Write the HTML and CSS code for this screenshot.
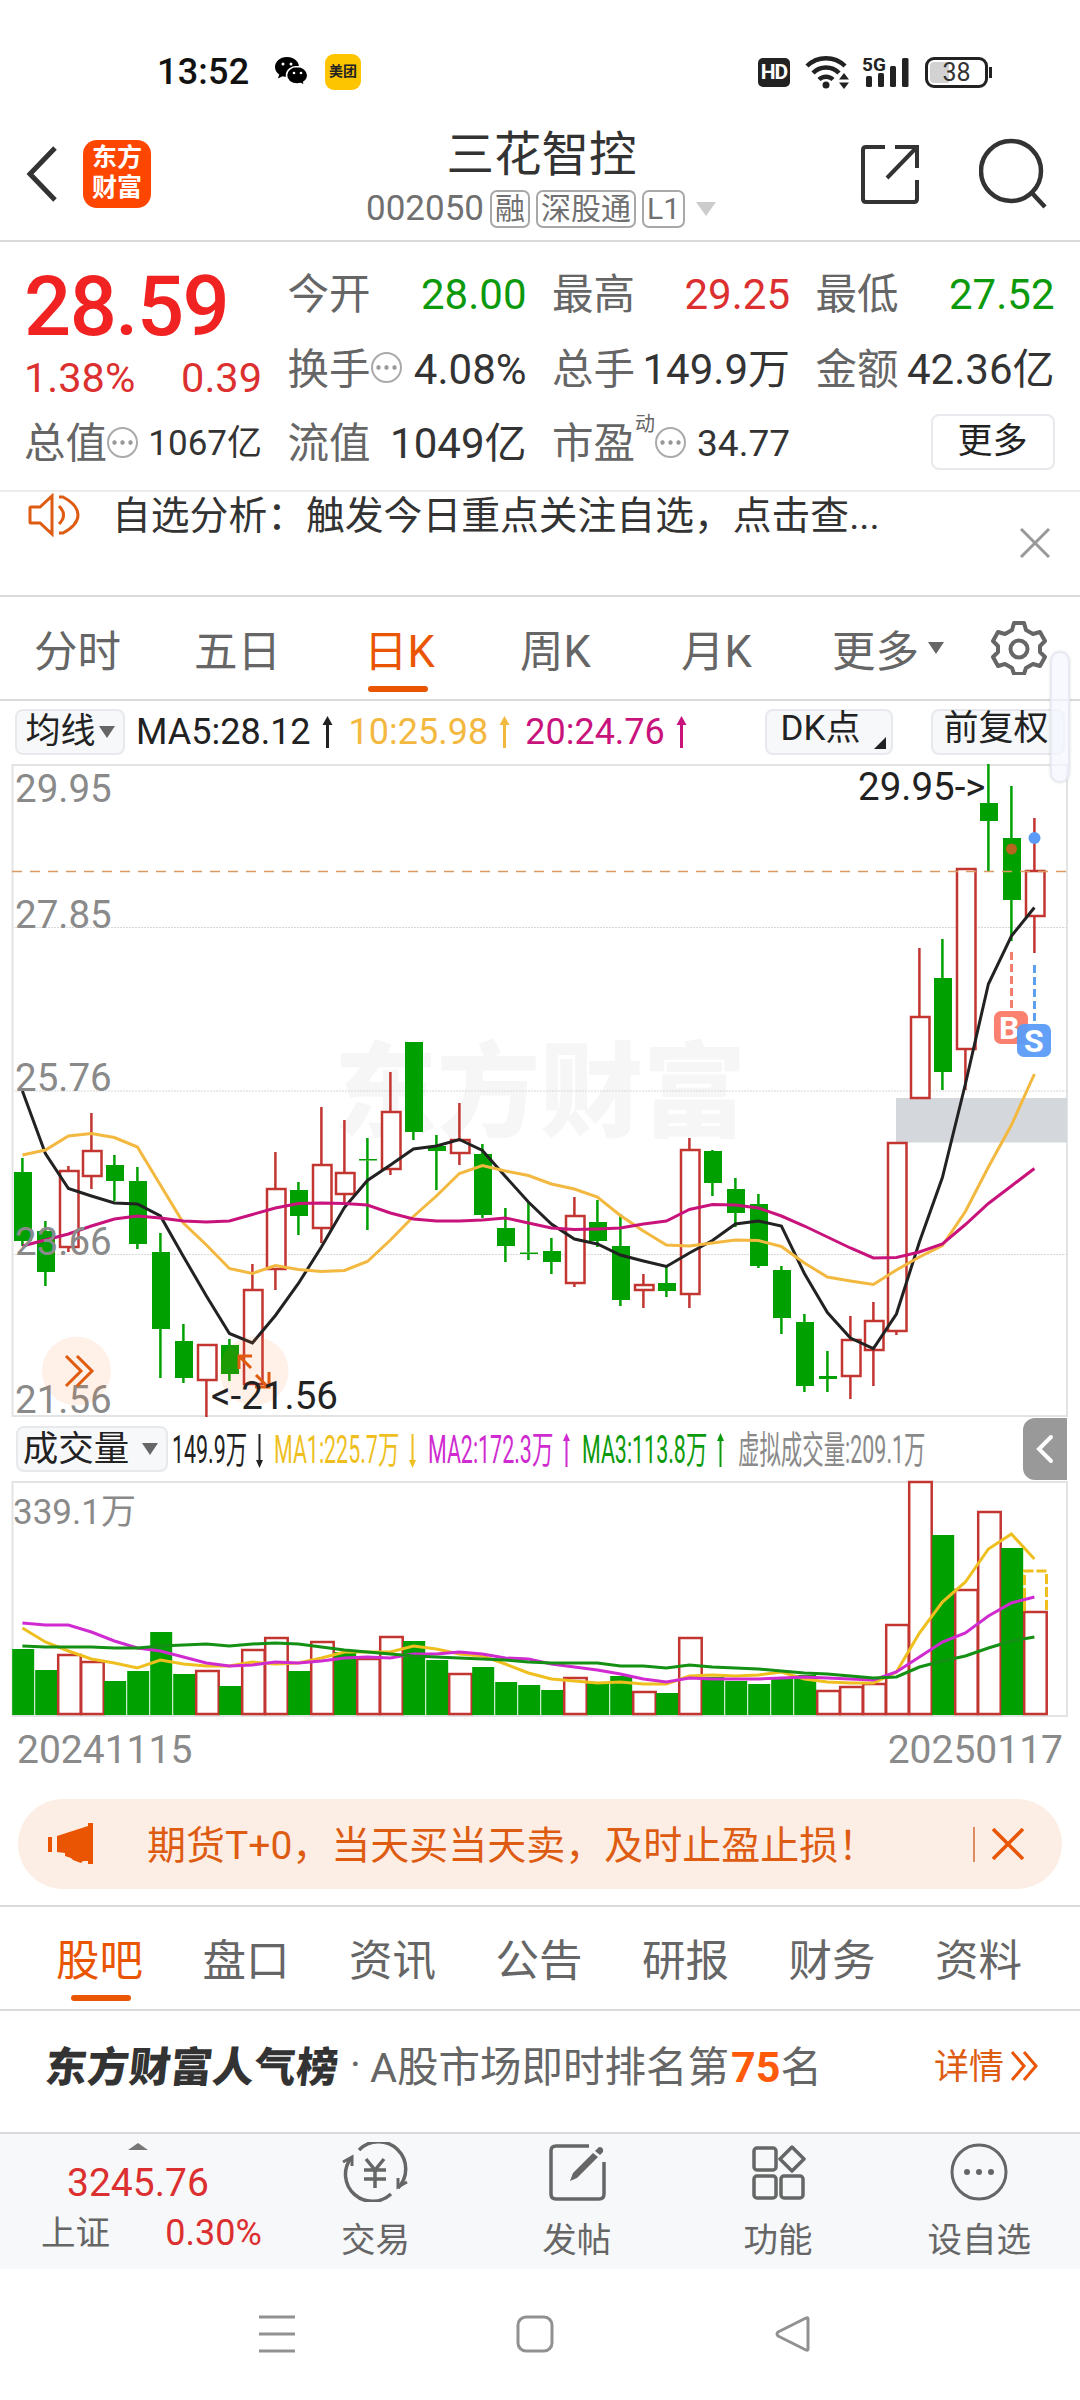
FILE: index.html
```
<!DOCTYPE html>
<html lang="zh-CN">
<head>
    <meta charset="UTF-8">
    <title>三花智控 002050</title>
    <meta name="viewport" content="width=device-width, initial-scale=1.0">
    <link rel="stylesheet" href="styles.css">
</head>
<body>
    <!-- Status bar -->
    <div class="status">
        <span class="clock">13:52</span>
        <svg class="wechat" width="34" height="30" viewBox="0 0 34 30">
            <path d="M12 0C5 0 0 4.600 0 10c0 3.200 1.600 5.800 4.200 7.600L3 21.500l4.500-2.300c1.400.4 3 .6 4.500.6C19 19.800 24 15.500 24 10S19 0 12 0z"/>
            <path d="M22 9.500c-6 0-10.500 4-10.500 8.800S16 27 22 27c1.300 0 2.500-.2 3.700-.5l4 2.200-1-3.500c2.400-1.600 4-4 4-6.900 0-4.800-4.600-8.800-10.700-8.800z" stroke="#fff" stroke-width="1.500"/>
            <g fill="#fff"><circle cx="8" cy="7" r="1.500"/><circle cx="16" cy="7" r="1.500"/><circle cx="19" cy="16" r="1.300"/><circle cx="26" cy="16" r="1.300"/></g>
        </svg>
        <span class="meituan">美团</span>
        <span class="hd">HD</span>
        <svg class="wifi" width="46" height="34" viewBox="0 0 46 34" fill="none" stroke="#222" stroke-width="4.500">
            <path d="M2 11a27 27 0 0 1 38 0"/>
            <path d="M8 18a18 18 0 0 1 26 0"/>
            <path d="M14 24.500a10 10 0 0 1 14 0"/>
            <circle cx="21" cy="30" r="3.500" fill="#222" stroke="none"/>
            <path d="M39 18l5 6.500h-10zM39 34l5-6.500h-10z" fill="#222" stroke="none"/>
        </svg>
        <svg class="signal" width="50" height="34" viewBox="0 0 50 34" fill="#222">
            <text x="0" y="15.500" class="net">5G</text>
            <rect x="4" y="21" width="6" height="11" rx="1.500"/>
            <rect x="16" y="18" width="6" height="14" rx="1.500"/>
            <rect x="28" y="11" width="6" height="21" rx="1.500"/>
            <rect x="40" y="3" width="6.500" height="29" rx="1.500"/>
        </svg>
        <span class="battery">38</span>
    </div>

    <!-- Title bar -->
    <div class="header">
        <svg class="back" width="32" height="56" viewBox="0 0 32 56"><path d="M29 2L4 28l25 26" fill="none" stroke="#333" stroke-width="5"/></svg>
        <div class="logo">东方<br>财富</div>
        <div class="title">
            <div class="name">三花智控</div>
            <div class="code"><span class="num">002050</span><span class="tag">融</span><span class="tag">深股通</span><span class="tag">L1</span><i class="down"></i></div>
        </div>
        <svg class="share" width="60" height="62" viewBox="0 0 60 62" fill="none" stroke="#333" stroke-width="4">
            <path d="M25 4H6q-3 0-3 3v49q0 3 3 3h48q3 0 3-3V37"/>
            <path d="M35 4h22v21M56 5L27 35"/>
        </svg>
        <svg class="search" width="70" height="72" viewBox="0 0 70 72" fill="none" stroke="#333" stroke-width="4.500">
            <circle cx="32" cy="33" r="30"/><path d="M53 55l13 14"/>
        </svg>
    </div>

    <!-- Quote -->
    <div class="quote">
        <div class="main">
            <div class="price">28.59</div>
            <div class="change"><span>1.38%</span><span>0.39</span></div>
        </div>
        <div class="cell"><span>今开</span><b class="green">28.00</b></div>
        <div class="cell"><span>最高</span><b class="red">29.25</b></div>
        <div class="cell"><span>最低</span><b class="green">27.52</b></div>
        <div class="cell"><span>换手</span><i class="tip"></i><b>4.08%</b></div>
        <div class="cell"><span>总手</span><b>149.9万</b></div>
        <div class="cell"><span>金额</span><b>42.36亿</b></div>
        <div class="cell"><span>总值</span><i class="tip"></i><b class="small">1067亿</b></div>
        <div class="cell"><span>流值</span><b>1049亿</b></div>
        <div class="cell"><span>市盈</span><sup>动</sup><i class="tip"></i><b class="mid">34.77</b></div>
        <div class="cell"><button class="more">更多</button></div>
    </div>

    <!-- Notice -->
    <div class="notice">
        <svg width="54" height="44" viewBox="0 0 54 44" fill="none" stroke="#dd5c12" stroke-width="3">
            <path d="M3 14h9L24 3v38L12 30H3q-1 0-1-1V15q0-1 1-1z"/>
            <path d="M31 13q9 9 0 18M31 4h4q15 8 15 18T35 40h-4"/>
        </svg>
        <span class="text">自选分析：触发今日重点关注自选，点击查...</span>
        <svg class="close" width="30" height="30" viewBox="0 0 30 30"><path d="M1 1l28 28M29 1L1 29" stroke="#999" stroke-width="3"/></svg>
    </div>

    <!-- Period tabs -->
    <div class="periods">
        <span>分时</span>
        <span>五日</span>
        <span class="active">日K</span>
        <span>周K</span>
        <span>月K</span>
        <span>更多<i class="down dark"></i></span>
        <svg width="56" height="54" viewBox="0 0 56 54" fill="none" stroke="#666" stroke-width="4" stroke-linejoin="round">
            <path d="M23 2h10l2 7 7 4 7-2 5 9-5 5v6l5 5-5 9-7-2-7 4-2 6H23l-2-6-7-4-7 2-5-9 5-5v-6l-5-5 5-9 7 2 7-4z"/>
            <circle cx="28" cy="28" r="8.500"/>
        </svg>
        <div class="handle"></div>
    </div>

    <!-- Moving averages -->
    <div class="averages">
        <button class="pick">均线<i class="down dark"></i></button>
        <span class="ma5">MA5:28.12<svg class="arrow" width="12" height="32" viewBox="0 0 12 32"><path d="M5 6h3v26H5zM6.500 0l5 9h-10z"/></svg></span>
        <span class="ma10">10:25.98<svg class="arrow" width="12" height="32" viewBox="0 0 12 32"><path d="M5 6h3v26H5zM6.500 0l5 9h-10z"/></svg></span>
        <span class="ma20">20:24.76<svg class="arrow" width="12" height="32" viewBox="0 0 12 32"><path d="M5 6h3v26H5zM6.500 0l5 9h-10z"/></svg></span>
        <button class="dk">DK点<i class="corner"></i></button>
        <button class="fq">前复权</button>
    </div>

    <!-- Candles -->
    <svg id="kline" class="chart" width="1080" height="653" viewBox="0 0 1080 653"></svg>

    <!-- Volume legend -->
    <div class="legend">
        <button class="pick wide">成交量<i class="down dark"></i></button>
        <svg id="legend" width="770" height="64" viewBox="170 0 770 64"></svg>
        <div class="side"><svg width="20" height="30" viewBox="0 0 20 30"><path d="M16 3L4 15l12 12" fill="none" stroke="#fff" stroke-width="4" stroke-linecap="round"/></svg></div>
    </div>

    <svg id="volume" class="chart" width="1080" height="236" viewBox="0 0 1080 236"></svg>
    <div class="dates"><span>20241115</span><span>20250117</span></div>

    <!-- Banner -->
    <div class="banner">
        <svg width="46" height="42" viewBox="0 0 46 42" fill="#ea5504"><path d="M0 14h4v15H0zM9 13L40 3V0h5v41h-5v-3h-5l-2 2-8-3-2-2-6-2v-3L9 29z"/></svg>
        <span class="text">期货T+0，当天买当天卖，及时止盈止损！</span>
        <i class="bar"></i>
        <svg width="32" height="32" viewBox="0 0 32 32"><path d="M1 1l30 30M31 1L1 31" stroke="#ea5504" stroke-width="3.500"/></svg>
    </div>

    <!-- Section tabs -->
    <div class="sections">
        <span class="active">股吧</span>
        <span>盘口</span>
        <span>资讯</span>
        <span>公告</span>
        <span>研报</span>
        <span>财务</span>
        <span>资料</span>
    </div>

    <!-- Popularity rank -->
    <div class="rank">
        <span class="brand">东方财富人气榜</span>
        <span class="dot">·</span>
        <span class="desc">A股市场即时排名第<b>75</b>名</span>
        <span class="detail">详情</span>
        <svg width="30" height="30" viewBox="0 0 30 30" fill="none" stroke="#ea5504" stroke-width="3"><path d="M2 1l12 14L2 29M14 1l12 14-12 14"/></svg>
    </div>

    <!-- Bottom bar -->
    <div class="toolbar">
        <div class="index">
            <i class="up"></i>
            <div class="point">3245.76</div>
            <div class="row"><span>上证</span><span class="red">0.30%</span></div>
        </div>
        <div class="item">
            <svg width="68" height="60" viewBox="0 0 68 60" fill="none" stroke="#666" stroke-width="3.500">
                <path d="M18 8A27 27 0 0 1 57 46M50 52A27 27 0 0 1 10 16"/>
                <path d="M2 20l9-5v9M66 40l-9 5v-9" stroke-width="3"/>
                <path d="M25 17l9 11 9-11M34 28v18M23 28h22M23 37h22"/>
            </svg>
            交易
        </div>
        <div class="item">
            <svg width="60" height="60" viewBox="0 0 60 60" fill="none" stroke="#666" stroke-width="3.500">
                <path d="M42 4H9Q4 4 4 9v43q0 5 5 5h43q5 0 5-5V20"/>
                <path d="M23 39l3-8L46 11l5 4-21 21zM48 9l4-4q5 0 4 5l-3 3z" fill="#666" stroke="none"/>
            </svg>
            发帖
        </div>
        <div class="item">
            <svg width="56" height="60" viewBox="0 0 56 60" fill="none" stroke="#666" stroke-width="3.500" stroke-linejoin="round">
                <rect x="4" y="6" width="22" height="22" rx="3"/>
                <rect x="4" y="34" width="22" height="22" rx="3"/>
                <rect x="31" y="34" width="22" height="22" rx="3"/>
                <path d="M42 5l12 12-12 12-12-12z"/>
            </svg>
            功能
        </div>
        <div class="item">
            <svg width="60" height="60" viewBox="0 0 60 60" fill="#666">
                <circle cx="30" cy="30" r="27" fill="none" stroke="#666" stroke-width="3"/>
                <circle cx="18" cy="30" r="3"/><circle cx="30" cy="30" r="3"/><circle cx="42" cy="30" r="3"/>
            </svg>
            设自选
        </div>
    </div>

    <!-- System navigation -->
    <div class="nav">
        <svg width="36" height="38" viewBox="0 0 36 38" stroke="#919191" stroke-width="3"><path d="M0 2h36M0 19h36M0 36h36"/></svg>
        <svg width="38" height="38" viewBox="0 0 38 38" fill="none" stroke="#919191" stroke-width="3"><rect x="2" y="2" width="34" height="34" rx="8"/></svg>
        <svg width="38" height="38" viewBox="0 0 38 38" fill="none" stroke="#919191" stroke-width="3" stroke-linejoin="round"><path d="M34 4v30q0 2-2 1L4 21q-2-2 0-4L32 3q2-1 2 1z"/></svg>
    </div>

    <script src="chart.js"></script>
</body>
</html>
```
FILE: styles.css
```
* {
    box-sizing: border-box;
}

body {
    margin: 0;
    width: 1080px;
    height: 2400px;
    overflow: hidden;
    background: #fff;
    color: #333;
    font-family: Roboto, "Noto Sans CJK SC", sans-serif;
}

svg {
    display: block;
    flex: none;
}

button {
    font-family: inherit;
    color: #222;
    padding: 0;
    border: 2px solid #e8e9ec;
    border-radius: 8px;
    background: #f7f8fa;
    white-space: nowrap;
}

.red {
    color: #dc2f2f !important;
}

.green {
    color: #0c9a0c !important;
}

.down {
    border: 10px solid transparent;
    border-top: 14px solid #ccc;
    border-bottom: 0;
}

.down.dark {
    border-width: 12px 8px 0;
    border-top-color: #666;
}

/* status bar */
.status {
    display: flex;
    align-items: center;
    height: 120px;
    padding: 24px 88px 0 157px;
}

.clock {
    width: 118px;
    font-size: 36px;
    font-weight: 500;
    letter-spacing: 0.2px;
    color: #111;
}

.meituan {
    width: 36px;
    height: 36px;
    margin: 0 auto 0 16px;
    border-radius: 9px;
    background: #fdc400;
    font-size: 14px;
    font-weight: 700;
    line-height: 35px;
    text-align: center;
    color: #222;
}

.hd {
    width: 32px;
    height: 29px;
    border-radius: 5px;
    background: #222;
    color: #fff;
    font-size: 21px;
    font-weight: 700;
    line-height: 29px;
    text-align: center;
    letter-spacing: -1px;
}

.wifi {
    margin-left: 15px;
}

.signal {
    margin: 0 13px 0 11px;
}

.net {
    font-size: 19px;
    font-weight: 700;
}

.battery {
    position: relative;
    width: 63px;
    height: 31px;
    border: 3px solid #222;
    border-radius: 9px;
    background: linear-gradient(90deg, #d2d2d2 21px, #fff 21px);
    box-shadow: inset 0 0 0 2px #fff;
    font-size: 25px;
    line-height: 26px;
    text-align: center;
    margin-right: 4px;
}

.battery::after {
    content: "";
    position: absolute;
    right: -7px;
    top: 7px;
    width: 3px;
    height: 11px;
    background: #222;
}

/* title bar */
.header {
    display: flex;
    align-items: center;
    height: 122px;
    padding: 0 31px 12px 26px;
    border-bottom: 2px solid #d9d9d9;
}

.logo {
    width: 68px;
    height: 68px;
    margin-left: 25px;
    padding-top: 3px;
    border-radius: 14px;
    background: #ff4600;
    color: #fff;
    font-size: 25px;
    font-weight: 700;
    line-height: 30px;
    text-align: center;
}

.title {
    width: 400px;
    margin: 8px auto 0 190px;
    text-align: center;
}

.name {
    font-size: 47.5px;
    line-height: 62px;
    margin-left: 1px;
}

.code {
    display: flex;
    align-items: center;
    justify-content: center;
    color: #707070;
    font-size: 30px;
}

.num {
    font-size: 35px;
    line-height: 46px;
}

.tag {
    height: 38px;
    margin-left: 6px;
    padding: 0 3px;
    border: 2px solid #a8a8a8;
    border-radius: 7px;
    line-height: 33px;
}

.code .down {
    margin-left: 11px;
}

.search {
    margin-left: 59px;
}

/* quote */
.quote {
    display: grid;
    grid-template-columns: 238px 239px 238px 239px;
    grid-template-rows: 74px 75px 74px;
    column-gap: 25.5px;
    height: 250px;
    padding: 16px 25px 0 24px;
    border-bottom: 2px solid #ececec;
}

.main {
    grid-row: 1 / 3;
    color: #dc2f2f;
}

.price {
    height: 90px;
    margin-top: 1px;
    color: #f02222;
    font-size: 83px;
    font-weight: 500;
    line-height: 96px;
    letter-spacing: -1.5px;
}

.change {
    display: flex;
    justify-content: space-between;
    font-size: 41.5px;
    line-height: 58px;
}

.cell {
    display: flex;
    align-items: center;
    font-size: 41.5px;
    line-height: 60px;
    color: #666;
    white-space: nowrap;
}

.cell b {
    margin-left: auto;
    font-weight: 400;
    font-size: 42px;
    color: #333;
}

.cell b.small {
    font-size: 35px;
}

.cell b.mid {
    font-size: 37px;
}

.cell sup {
    align-self: flex-start;
    font-size: 20px;
    line-height: 34px;
}

.tip {
    width: 31px;
    height: 31px;
    margin-bottom: 4px;
    border: 2px solid #aaa;
    border-radius: 50%;
    background: radial-gradient(circle, #999 2px, transparent 2.5px) center / 8px 27px repeat-x;
}

.more {
    width: 124px;
    height: 56px;
    margin: -5px 0 0 auto;
    background: #fff;
    font-size: 35px;
    line-height: 48px;
}

/* notice */
.notice {
    display: flex;
    align-items: flex-start;
    height: 105px;
    padding: 1px 30px 0 28px;
    border-bottom: 2px solid #d9d9d9;
}

.notice .text {
    margin: -6px auto 0 30px;
    font-size: 38.8px;
    line-height: 58px;
    white-space: nowrap;
}

.close {
    margin-top: 35px;
}

/* period tabs */
.periods {
    position: relative;
    display: grid;
    grid-template-columns: 160px 170px 156px 161px 151px 159px 56px;
    align-items: center;
    height: 104px;
    padding-left: 34px;
    border-bottom: 2px solid #d9d9d9;
    color: #666;
    font-size: 43.5px;
}

.periods span {
    position: relative;
    display: flex;
    align-items: center;
}

.periods .down {
    margin-left: 9px;
}

.active {
    color: #ea5504;
}

.active::after {
    content: "";
    position: absolute;
    left: 4px;
    bottom: -12px;
    width: 60px;
    height: 6px;
    border-radius: 3px;
    background: #ea5504;
}

.handle {
    position: absolute;
    z-index: 2;
    left: 1050px;
    top: 54px;
    width: 20px;
    height: 132px;
    border: 2px solid rgba(225, 226, 235, 0.7);
    border-radius: 10px;
    background: rgba(244, 246, 255, 0.7);
    box-shadow: 0 0 3px rgba(0, 0, 0, 0.12);
}

/* moving averages */
.averages {
    display: flex;
    align-items: center;
    height: 63px;
    padding: 0 15px 2px 15px;
    font-size: 36px;
}

.pick {
    display: flex;
    align-items: center;
    justify-content: center;
    width: 110px;
    height: 46px;
    font-size: 35px;
    line-height: 40px;
}

.pick .down {
    margin-left: 3px;
}

.averages span {
    display: flex;
    align-items: center;
}

.arrow {
    fill: currentColor;
    margin-left: 10px;
}

.ma5 {
    margin-left: 11px;
    color: #222;
}

.ma10 {
    margin-left: 16px;
    color: #f3b83f;
}

.ma20 {
    margin-left: 15px;
    color: #c9137c;
}

.dk {
    position: relative;
    width: 128px;
    height: 46px;
    margin-left: auto;
    padding: 0 17px 6px 0;
    font-size: 35px;
    line-height: 36px;
}

.corner {
    position: absolute;
    right: 5px;
    bottom: 4px;
    border: 6px solid #222;
    border-top-color: transparent;
    border-left-color: transparent;
}

.fq {
    width: 134px;
    height: 46px;
    margin-left: 38px;
    padding: 0 4px 6px 0;
    font-size: 35px;
    line-height: 36px;
}

/* charts */
.chart {
    overflow: visible;
}

.chart text {
    font-size: 38.5px;
    fill: #8a8a8a;
}

.chart .peak {
    fill: #222;
}

.chart .mark {
    font-size: 103px;
    font-weight: 900;
    fill: #f6f6f6;
}

.chart .trade {
    font-size: 32px;
    font-weight: 700;
    fill: #fff;
}

.chart .max {
    font-size: 35px;
}

.legend {
    display: flex;
    align-items: center;
    height: 64px;
    padding: 0 13px 0 16px;
}

.legend text {
    font-size: 38px;
}

.wide {
    width: 152px;
    margin-right: 2px;
    padding-right: 3px;
    font-size: 35.5px;
}

.wide .down {
    margin-left: 13px;
}

.side {
    display: flex;
    align-items: center;
    justify-content: center;
    width: 44px;
    height: 62px;
    margin-left: auto;
    border-radius: 12px 0 0 12px;
    background: #999;
}

.dates {
    display: flex;
    justify-content: space-between;
    height: 82px;
    padding: 9px 17px 0 17px;
    color: #8a8a8a;
    font-size: 39px;
    line-height: 48px;
}

/* banner */
.banner {
    display: flex;
    align-items: center;
    height: 90px;
    margin: 0 18px 16px;
    padding: 0 38px 0 30px;
    border-radius: 45px;
    background: #fdeee5;
    color: #dd5c12;
    font-size: 39px;
}

.banner .text {
    margin: -5px 0 0 53px;
    white-space: nowrap;
}

.bar {
    width: 2px;
    height: 35px;
    margin: 0 17px 0 auto;
    background: #dd8c62;
}

/* section tabs */
.sections {
    display: flex;
    align-items: center;
    justify-content: space-between;
    height: 106px;
    padding: 0 58px 2px 56px;
    border-top: 2px solid #d9d9d9;
    border-bottom: 2px solid #d9d9d9;
    color: #666;
    font-size: 43.5px;
}

.sections span {
    position: relative;
}

.sections .active::after {
    left: 15px;
}

/* popularity rank */
.rank {
    display: flex;
    align-items: center;
    height: 121px;
    padding: 0 40px 16px 46px;
    font-size: 41.5px;
    color: #666;
    white-space: nowrap;
}

.rank svg {
    margin-top: 4px;
}

.brand {
    font-weight: 900;
    color: #333;
    width: 304px;
    letter-spacing: 0.3px;
    transform: skewX(-6deg);
}

.dot {
    width: 20px;
}

.rank b {
    padding-left: 2px;
    font-size: 43px;
    color: #ff5a0a;
}

.detail {
    margin: 0 6px 0 auto;
    font-size: 35px;
    color: #dd5c12;
}

/* bottom bar */
.toolbar {
    display: flex;
    height: 137px;
    border-top: 2px solid #d9d9db;
    background: #f7f8fa;
    color: #666;
    font-size: 34.5px;
}

.index {
    width: 275px;
    padding: 9px 13px 0 41px;
}

.up {
    display: block;
    width: 0;
    margin-left: 87px;
    border: 10px solid transparent;
    border-top: 0;
    border-bottom: 7px solid #777;
}

.point {
    margin: 10px 0 0 26px;
    font-size: 39px;
    line-height: 46px;
    color: #dc2f2f;
}

.row {
    display: flex;
    justify-content: space-between;
    line-height: 54px;
}

.row .red {
    font-size: 36px;
}

.item {
    display: flex;
    flex-direction: column;
    align-items: center;
    width: 201.5px;
    padding-top: 8px;
    line-height: 77px;
}

/* system navigation */
.nav {
    display: flex;
    justify-content: space-between;
    padding: 46px 268px 0 259px;
}
```
FILE: chart.js
```
const RED = '#c23531', GREEN = '#00a000', STEP = 23, X0 = 22.4;

// [up?, high, body top, body bottom, low]
const candles = [
    [0, 394, 408, 477, 482], [0, 457, 467, 508, 522], [1, 402, 407, 483, 488], [1, 349, 387, 412, 425],
    [0, 391, 401, 417, 437], [0, 403, 417, 480, 485], [0, 469, 488, 565, 614], [0, 560, 577, 614, 619],
    [1, 581, 581, 616, 653], [0, 575, 581, 610, 617], [1, 500, 526, 620, 620], [1, 388, 425, 505, 526],
    [0, 418, 426, 452, 471], [1, 343, 401, 464, 479], [1, 356, 409, 430, 440], [0, 374, 395, 396.5, 466],
    [1, 308, 348, 405, 411], [0, 278, 278, 368, 376], [0, 371, 382, 387, 426], [1, 339, 376, 389, 401],
    [0, 380, 390, 451, 454], [0, 444, 464, 482, 498], [0, 438, 488.5, 490, 496], [0, 474, 487, 498, 510],
    [1, 433, 452, 519, 523], [0, 436, 458, 477, 483], [0, 450, 482, 536, 542], [1, 510, 521, 526, 544],
    [0, 503, 519, 527, 533], [1, 374, 386, 530, 544], [0, 386, 387, 419, 432], [0, 414, 425, 449, 463],
    [0, 430, 440, 502, 504], [0, 502, 506, 554, 570], [0, 550, 558, 622, 628], [0, 587, 612, 615, 628],
    [1, 552, 576, 612, 635], [1, 538, 557, 586, 622], [1, 379, 379, 567, 571], [1, 184, 253, 334, 334],
    [0, 175, 214, 308, 326], [1, 105, 105, 285, 326], [0, 0, 39, 57, 108], [0, 22, 74, 136, 177],
    [1, 54, 107, 152, 189]
];
const ma5 = [327, 389.5, 424.5, 432, 439, 440, 452, 492.5, 532, 569.5, 579, 551.5, 519.5, 483, 443.5, 416.5, 401, 385, 382, 375.5, 386.5, 412.5, 438, 460, 475, 480, 491, 497, 502.5, 489, 476.5, 460, 457, 462, 509.5, 548.5, 574, 584.5, 550, 478, 413.5, 320, 220, 172, 143.5];
const ma10 = [391, 386, 372, 369.5, 373.5, 383, 421, 459, 481, 504.5, 509.5, 501.5, 505.5, 507.5, 506.5, 497.5, 476, 452.5, 432, 409.5, 401.5, 407, 411.5, 420, 425, 433, 451.5, 467, 481, 482, 479, 476, 476.5, 482.5, 499, 513, 517, 520.5, 506, 493, 481.5, 447.5, 403, 361, 310];
const ma20 = [482, 476, 470, 462, 455, 452, 454, 457, 458, 457, 450.5, 444, 439.5, 439, 439.5, 441, 449, 455, 457, 457, 456, 454, 459, 464, 465.5, 465, 464, 460, 457, 445.5, 440.5, 441, 444, 452, 462, 473, 484, 494, 493.5, 488, 480, 460.5, 439.5, 422, 404.5];

// top edge of each volume bar
const volumes = [168, 189, 174, 181, 200, 190, 151, 193, 190, 205, 169, 157, 190, 161, 171, 178, 156, 160, 179, 193, 186, 201, 204, 209, 197, 202, 195, 211, 212, 157, 196, 200, 203, 198, 194, 210, 206, 203, 144, 1, 54, 109, 31, 67, 131];
const volUp = [2, 3, 8, 10, 11, 13, 15, 16, 19, 24, 27, 29, 35, 36, 37, 38, 39, 41, 42, 44];
const vma1 = [147, 161, 170, 178, 182, 187, 179, 183, 185, 185, 181, 183, 182, 177, 171, 171, 171, 165, 168, 173, 175, 183, 192, 198, 200, 202, 201, 203, 203, 195, 194, 195, 194, 191, 198, 201, 202, 202, 191, 152, 121, 101, 68, 53, 78];
const vma2 = [142, 144, 144, 151, 160, 167, 170, 176, 182, 185, 184, 181, 182, 180, 177, 176, 177, 173, 173, 171, 173, 177, 178, 183, 186, 189, 193, 198, 201, 197, 198, 198, 198, 197, 196, 197, 198, 199, 191, 176, 161, 152, 135, 122, 116];
const vma3 = [165, 166, 166, 166, 167, 167, 165, 164, 163, 165, 163, 162, 163, 166, 169, 171, 173, 175, 176, 177, 178, 179, 181, 182, 182, 182, 185, 185, 187, 184, 186, 187, 188, 190, 192, 193, 195, 197, 196, 186, 180, 175, 167, 160, 156];

function line(data, color) {
    const pts = data.map((y, i) => (X0 + i * STEP).toFixed(1) + ',' + y).join(' ');
    return `<polyline points="${pts}" fill="none" stroke="${color}" stroke-width="3"/>`;
}

function drawKline() {
    let s = '<text class="mark" x="334" y="365">东方财富</text>';
    [163.5, 327, 490.5].forEach(y => {
        s += `<path d="M12 ${y}H1067" stroke="#d8d8d8" stroke-dasharray="2 1"/>`;
    });
    s += '<path d="M12.500 1H1067V652H12.500z" fill="none" stroke="#e3e3e3" stroke-width="2"/>';
    s += '<rect x="896" y="334" width="171" height="44.500" fill="#d4d7dc"/>';
    candles.forEach(([up, hi, top, bot, lo], i) => {
        const x = X0 + i * STEP, left = 14 + i * STEP, c = up ? RED : GREEN;
        s += `<path d="M${x} ${hi}V${top}M${x} ${bot}V${lo}" stroke="${c}" stroke-width="2.500"/>`;
        s += up
            ? `<rect x="${left}" y="${top}" width="18.500" height="${bot - top}" fill="#fff" stroke="${c}" stroke-width="2.500"/>`
            : `<rect x="${left}" y="${top}" width="18" height="${bot - top}" fill="${c}"/>`;
    });
    s += '<path d="M12 107.500H1067" stroke="#dc9a62" stroke-width="1.500" stroke-dasharray="10 8"/>';
    s += line(ma5, '#222') + line(ma10, '#f3b83f') + line(ma20, '#c9137c');
    [['29.95', 38], ['27.85', 163.5], ['25.76', 327], ['23.66', 490.5], ['21.56', 649]].forEach(([t, y]) => {
        s += `<text x="15" y="${y}">${t}</text>`;
    });
    s += '<text class="peak" x="858" y="36">29.95-&gt;</text>';

    // round buttons over the chart
    s += '<g fill="#ff7832" fill-opacity=".11"><circle cx="76.500" cy="607" r="34.500"/><circle cx="254" cy="607" r="34.500"/></g>';
    s += '<g fill="none" stroke="#e05a10" stroke-width="3"><path d="M66 592l15 15-15 15M77 592l15 15-15 15"/>';
    s += '<path d="M239 605v-13h13M239 592l12 12M256 611l13 13M269 608v15h-14"/></g>';
    s += '<text class="peak" x="211" y="644.500">&lt;-21.56</text>';

    // buy and sell marks
    s += '<circle cx="1011.500" cy="85" r="5.500" fill="#b5651d"/><circle cx="1034.500" cy="74" r="6" fill="#5b9bf8"/>';
    s += '<path d="M1011.500 188v57" stroke="#f28070" stroke-width="3" stroke-dasharray="8 4"/>';
    s += '<path d="M1034.500 201v57" stroke="#5fa0ec" stroke-width="3" stroke-dasharray="8 4"/>';
    s += '<rect x="994" y="247" width="34" height="33" rx="7" fill="#fa8070"/><text class="trade" x="999" y="275">B</text>';
    s += '<rect x="1017" y="260" width="34" height="33" rx="7" fill="#5b9bf8" fill-opacity=".95"/><text class="trade" x="1024" y="288">S</text>';
    document.getElementById('kline').innerHTML = s;
}

function drawLegend() {
    // text, x, width, color, arrow direction
    const items = [
        ['149.9万', 172, 75, '#222', -1],
        ['MA1:225.7万', 274, 126, '#eebf1f', -1],
        ['MA2:172.3万', 428, 126, '#cf2bd0', 1],
        ['MA3:113.8万', 582, 126, '#0c9a0c', 1],
        ['虚拟成交量:209.1万', 738, 190, '#8a8a8a', 0]
    ];
    let s = '';
    items.forEach(([t, x, w, c, dir]) => {
        s += `<text transform="translate(${x} 45.500) scale(.564 1)" fill="${c}">${t}</text>`;
        const ax = x + w + 12.5;
        if (dir > 0) s += `<path d="M${ax - 1} 24h2v26h-2zM${ax} 16l3.500 8h-7z" fill="${c}"/>`;
        if (dir < 0) s += `<path d="M${ax - 1} 17h2v26h-2zM${ax} 51l3.500-8h-7z" fill="${c}"/>`;
    });
    document.getElementById('legend').innerHTML = s;
}

function drawVolume() {
    let s = '<path d="M12.500 1H1067V235H12.500z" fill="none" stroke="#e3e3e3" stroke-width="2"/>';
    s += '<text class="max" x="13" y="43">339.1万</text>';
    volumes.forEach((y, i) => {
        const x = 12.2 + i * STEP;
        s += volUp.includes(i)
            ? `<rect x="${x}" y="${y}" width="22.500" height="${233 - y}" fill="#fff" stroke="${RED}" stroke-width="2.500"/>`
            : `<rect x="${x}" y="${y}" width="22" height="${234 - y}" fill="${GREEN}"/>`;
    });
    s += '<path d="M1024.500 130V90H1046.500V130" fill="none" stroke="#eebf1f" stroke-width="3" stroke-dasharray="10 3"/>';
    s += line(vma1, '#eebf1f') + line(vma2, '#cf2bd0') + line(vma3, '#149014');
    document.getElementById('volume').innerHTML = s;
}

drawKline();
drawLegend();
drawVolume();
```
